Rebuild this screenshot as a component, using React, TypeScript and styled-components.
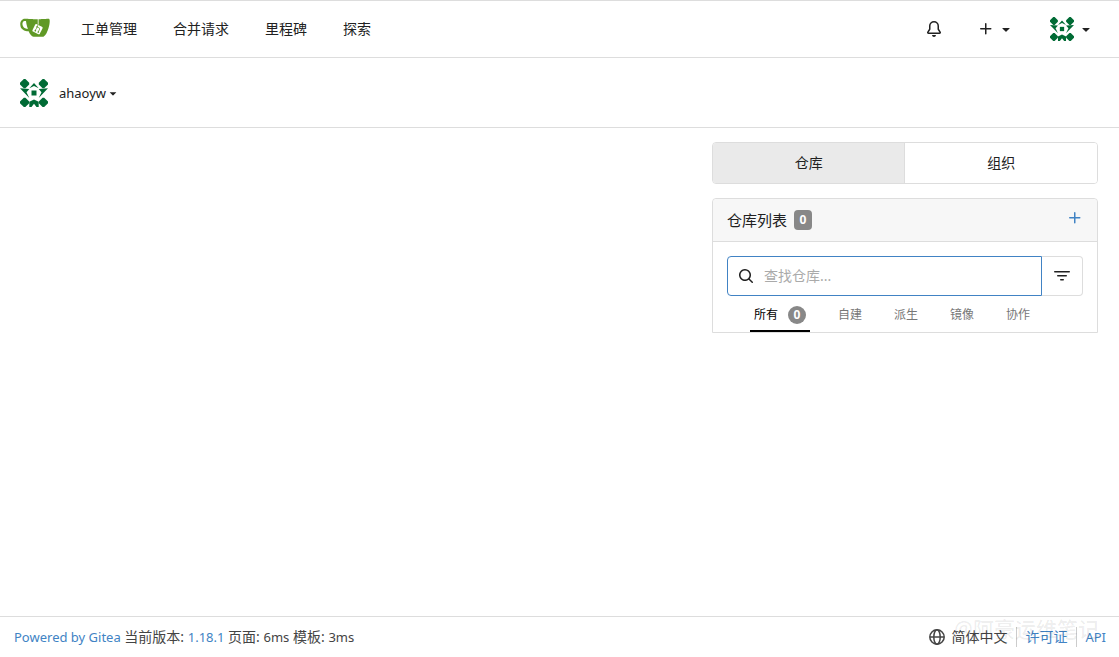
import React from "react";
import styled, { createGlobalStyle } from "styled-components";

const GlobalStyle = createGlobalStyle`
  * { box-sizing: border-box; }
  body {
    margin: 0;
    background: #fff;
    color: #212121;
    font-family: "Noto Sans", "Noto Sans CJK SC", sans-serif;
    font-size: 14px;
    line-height: 20px;
  }
  button, input { font: inherit; color: inherit; }
  a { color: #4183c4; text-decoration: none; }
`;

const Page = styled.div`
  min-height: 100vh;
  display: flex;
  flex-direction: column;
`;

const NavBar = styled.nav`
  display: flex;
  align-items: center;
  height: 58px;
  padding: 0 25px 0 20px;
  border-top: 1px solid #ddd;
  border-bottom: 1px solid #ddd;
`;

const LogoLink = styled.a`
  display: flex;
  margin-right: 31px;
  padding-bottom: 4px;
`;

const NavLinks = styled.div`
  display: flex;
  gap: 36px;
  flex: 1;
`;

const NavLink = styled.a`
  color: #212121;
`;

const NavTools = styled.div`
  display: flex;
  align-items: center;
  gap: 36px;
`;

const PlainButton = styled.button<{ $gap?: number }>`
  display: flex;
  align-items: center;
  gap: ${(p) => p.$gap ?? 0}px;
  padding: 0;
  border: 0;
  background: none;
  cursor: pointer;
`;

const ContextBar = styled.header`
  display: flex;
  align-items: center;
  height: 70px;
  padding: 0 20px;
  border-bottom: 1px solid #ddd;
`;

const Latin = styled.span`
  font-size: 13px;
`;

const UserName = styled(Latin)`
  margin-left: 11px;
`;

const Dashboard = styled.main`
  flex: 1;
  display: grid;
  grid-template-columns: minmax(0, 34fr) minmax(0, 19fr);
  align-items: start;
  padding: 14px 21px;
`;

const Sidebar = styled.aside`
  grid-column: 2;
  display: flex;
  flex-direction: column;
  gap: 14px;
`;

const Switcher = styled.div`
  display: flex;
  height: 42px;
  border: 1px solid #ddd;
  border-radius: 4px;
  overflow: hidden;
`;

const SwitchButton = styled.button<{ $active?: boolean }>`
  flex: 1;
  padding: 0;
  border: 0;
  background: ${(p) => (p.$active ? "#eaeaea" : "#fff")};
  cursor: pointer;
  & + & { border-left: 1px solid #ddd; }
`;

const Panel = styled.section`
  border: 1px solid #ddd;
  border-radius: 4px 4px 0 0;
`;

const PanelHeader = styled.div`
  display: flex;
  align-items: center;
  height: 43px;
  padding: 0 14px;
  border-bottom: 1px solid #ddd;
  border-radius: 4px 4px 0 0;
  background: #f7f7f7;
`;

const PanelTitle = styled.h4`
  margin: 0;
  font-size: 15px;
  font-weight: 400;
`;

const Count = styled.span<{ $round?: boolean }>`
  display: flex;
  align-items: center;
  justify-content: center;
  width: 18px;
  height: ${(p) => (p.$round ? 18 : 20)}px;
  border-radius: ${(p) => (p.$round ? 9 : 4)}px;
  background: #888;
  color: #fff;
  font-size: 12px;
  font-weight: 700;
`;

const TitleCount = styled(Count)`
  margin-left: 7px;
`;

const AddLink = styled.a`
  display: flex;
  margin: 0 0 4px auto;
`;

const SearchRow = styled.form`
  display: flex;
  padding: 14px 14px 0;
`;

const SearchBox = styled.label`
  flex: 1;
  display: flex;
  align-items: center;
  gap: 10px;
  height: 40px;
  padding: 0 10px;
  border: 1px solid #4183c4;
  border-radius: 4px 0 0 4px;
`;

const SearchInput = styled.input`
  flex: 1;
  min-width: 0;
  padding: 0;
  border: 0;
  outline: 0;
  background: none;
  &::placeholder { color: #aaa; opacity: 1; }
`;

const FilterButton = styled(PlainButton)`
  justify-content: center;
  width: 41px;
  border: 1px solid #ddd;
  border-left: 0;
  border-radius: 0 4px 4px 0;
`;

const Tabs = styled.div`
  display: flex;
  gap: 24px;
  padding: 0 37px;
`;

const Tab = styled.button<{ $active?: boolean }>`
  display: flex;
  align-items: center;
  gap: 10px;
  height: 36px;
  padding: 3px 4px 0;
  border: 0;
  border-bottom: 2px solid ${(p) => (p.$active ? "#000" : "transparent")};
  background: none;
  color: ${(p) => (p.$active ? "#000" : "#777")};
  font-size: 12px;
  cursor: pointer;
`;

const Footer = styled.footer`
  position: relative;
  display: flex;
  align-items: center;
  justify-content: space-between;
  height: 41px;
  padding: 0 13px 0 14px;
  border-top: 1px solid #ddd;
  color: #444;
`;

const FooterLinks = styled.div`
  display: flex;
  align-items: center;
  & > * + * {
    margin-left: 9px;
    padding-left: 8px;
    border-left: 1px solid #ccc;
  }
`;

const Watermark = styled.span`
  position: absolute;
  top: 0;
  right: 20px;
  color: rgba(0, 0, 0, 0.08);
  font-size: 21px;
  font-weight: 500;
  line-height: 24px;
  pointer-events: none;
`;

const icons = {
  bell: "M8 16a2 2 0 001.985-1.75c.017-.137-.097-.25-.235-.25h-3.5c-.138 0-.252.113-.235.25A2 2 0 008 16zM8 1.5A3.5 3.5 0 004.5 5v2.947c0 .346-.102.683-.294.97l-1.703 2.556a.018.018 0 00-.003.01l.001.006c0 .002.002.004.004.006a.017.017 0 00.006.004l.007.001h10.964l.007-.001a.016.016 0 00.006-.004.016.016 0 00.004-.006l.001-.007a.017.017 0 00-.003-.01l-1.703-2.554a1.75 1.75 0 01-.294-.97V5A3.5 3.5 0 008 1.5zM3 5a5 5 0 0110 0v2.947c0 .05.015.098.042.139l1.703 2.555A1.518 1.518 0 0113.482 13H2.518a1.518 1.518 0 01-1.263-2.36l1.703-2.554A.25.25 0 003 7.947V5z",
  plus: "M7.75 2a.75.75 0 01.75.75V7h4.25a.75.75 0 110 1.5H8.5v4.25a.75.75 0 11-1.5 0V8.5H2.75a.75.75 0 010-1.5H7V2.75A.75.75 0 017.75 2z",
  caret: "M4.427 7.427l3.396 3.396a.25.25 0 00.354 0l3.396-3.396A.25.25 0 0011.396 7H4.604a.25.25 0 00-.177.427z",
  search: "M11.5 7a4.499 4.499 0 11-8.998 0A4.499 4.499 0 0111.5 7zm-.82 4.74a6 6 0 111.06-1.06l3.04 3.04a.75.75 0 11-1.06 1.06l-3.04-3.04z",
  filter: "M.75 3a.75.75 0 000 1.5h14.5a.75.75 0 000-1.5H.75zM3 7.75A.75.75 0 013.75 7h8.5a.75.75 0 010 1.5h-8.5A.75.75 0 013 7.75zm3 4a.75.75 0 01.75-.75h2.5a.75.75 0 010 1.5h-2.5a.75.75 0 01-.75-.75z",
};

function Icon({ name, size = 16 }: { name: keyof typeof icons; size?: number }) {
  return (
    <svg width={size} height={size} viewBox="0 0 16 16" fill="currentColor" fillRule="evenodd" aria-hidden="true">
      <path d={icons[name]} />
    </svg>
  );
}

function Globe() {
  return (
    <svg width="16" height="16" viewBox="0 0 16 16" fill="none" stroke="currentColor" strokeWidth="1.5" aria-hidden="true">
      <circle cx="8" cy="8" r="7.2" />
      <ellipse cx="8" cy="8" rx="3.2" ry="7.2" />
      <path d="M1 8h14" />
    </svg>
  );
}

function Logo() {
  return (
    <svg width="30" height="30" viewBox="0 0 640 640" aria-hidden="true">
      <path fill="#fff" d="M395.9,484.2l-126.9-61c-12.5-6-17.9-21.2-11.8-33.8l61-126.9c6-12.5,21.2-17.9,33.8-11.8c17.2,8.3,27.1,13,27.1,13l-0.1-109.2l16.7-0.1l0.1,117.1c0,0,57.4,24.2,83.1,40.1c3.7,2.3,10.2,6.8,12.9,14.4c2.1,6.1,2,13.1-1,19.3l-61,126.9C423.6,484.9,408.4,490.3,395.9,484.2z" />
      <path fill="#609926" d="M622.7,149.8c-4.1-4.1-9.6-4-9.6-4s-117.2,6.6-177.9,8c-13.3,0.3-26.5,0.6-39.6,0.7c0,39.1,0,78.2,0,117.2c-5.5-2.6-11.1-5.3-16.6-7.9c0-36.4-0.1-109.2-0.1-109.2c-29,0.4-89.2-2.2-89.2-2.2s-141.4-7.1-156.8-8.5c-9.8-0.6-22.5-2.1-39,1.5c-8.7,1.8-33.5,7.4-53.8,26.9C-4.9,212.4,6.6,276.2,8,285.8c1.7,11.7,6.9,44.2,31.7,72.5c45.8,56.1,144.4,54.8,144.4,54.8s12.1,28.9,30.6,55.5c25,33.1,50.7,58.9,75.7,62c63,0,188.9-0.1,188.9-0.1s12,0.1,28.3-10.3c14-8.5,26.5-23.4,26.5-23.4s12.9-13.8,30.9-45.3c5.5-9.7,10.1-19.1,14.1-28c0,0,55.2-117.1,55.2-231.1C633.2,157.9,624.7,151.8,622.7,149.8z M125.6,353.9c-25.9-8.5-36.9-18.7-36.9-18.7S69.6,321.8,60,295.4c-16.5-44.2-1.4-71.2-1.4-71.2s8.4-22.5,38.5-30c13.8-3.7,31-3.1,31-3.1s7.1,59.4,15.7,94.2c7.2,29.2,24.8,77.7,24.8,77.7S142.5,359.9,125.6,353.9z M425.9,461.5c0,0-6.1,14.5-19.6,15.4c-5.8,0.4-10.3-1.2-10.3-1.2s-0.3-0.1-5.3-2.1l-112.9-55c0,0-10.9-5.7-12.8-15.6c-2.2-8.1,2.7-18.1,2.7-18.1L322,273c0,0,4.8-9.7,12.2-13c0.6-0.3,2.3-1,4.5-1.5c8.1-2.1,18,2.8,18,2.8l110.7,53.7c0,0,12.6,5.7,15.3,16.2c1.9,7.4-0.5,14-1.8,17.2C474.6,363.8,425.9,461.5,425.9,461.5z" />
      <path fill="#609926" d="M326.8,380.1c-8.2,0.1-15.4,5.8-17.3,13.8c-1.9,8,2,16.3,9.1,20c7.7,4,17.5,1.8,22.7-5.4c5.1-7.1,4.3-16.9-1.8-23.1l24-49.1c1.5,0.1,3.7,0.2,6.2-0.5c4.1-0.9,7.1-3.6,7.1-3.6c4.2,1.8,8.6,3.8,13.2,6.1c4.8,2.4,9.3,4.9,13.4,7.3c0.9,0.5,1.8,1.1,2.8,1.9c1.6,1.3,3.4,3.1,4.7,5.5c1.9,5.5-1.9,14.9-1.9,14.9c-2.3,7.6-18.4,40.6-18.4,40.6c-8.1-0.2-15.3,5-17.7,12.5c-2.6,8.1,1.1,17.3,8.9,21.3c7.8,4,17.4,1.7,22.5-5.3c5-6.8,4.6-16.3-1.1-22.6c1.9-3.7,3.7-7.4,5.6-11.3c5-10.4,13.5-30.4,13.5-30.4c0.9-1.7,5.7-10.3,2.7-21.3c-2.5-11.4-12.6-16.7-12.6-16.7c-12.2-7.9-29.2-15.2-29.2-15.2s0-4.1-1.1-7.1c-1.1-3.1-2.8-5.1-3.9-6.3c4.7-9.7,9.4-19.3,14.1-29c-4.1-2-8.1-4-12.2-6.1c-4.8,9.8-9.7,19.7-14.5,29.5c-6.7-0.1-12.9,3.5-16.1,9.4c-3.4,6.3-2.7,14.1,1.9,19.8C343.2,346.5,335,363.3,326.8,380.1z" />
    </svg>
  );
}

function Identicon({ size }: { size: number }) {
  const corners = [[4.6, 4.6], [23.4, 4.6], [4.6, 23.4], [23.4, 23.4]];
  return (
    <svg width={size} height={size} viewBox="0 0 28 28" fill="#006b35" aria-hidden="true">
      {corners.map(([x, y]) => (
        <path key={`${x}-${y}`} d={`M${x - 0.8} ${y - 4.6}h1.6l3.8 3.8v1.6l-3.8 3.8h-1.6l-3.8-3.8v-1.6z`} />
      ))}
      <path d="M14 4l4.700 5.300-4.700-2.300-4.700 2.300z" />
      <path d="M11.500 11.500h5v5h-5z" />
      <path d="M0 9.300l9.300.7-2.800 3.200 2.800 5.900zM28 9.300l-9.300.7 2.800 3.200-2.800 5.900z" />
      <path d="M9.300 28v-5.200L14 20.500l4.700 2.300V28h-2.200l-2.500-3.200-2.500 3.200z" />
    </svg>
  );
}

export default function App() {
  return (
    <Page>
      <GlobalStyle />
      <NavBar>
        <LogoLink href="#" aria-label="Gitea"><Logo /></LogoLink>
        <NavLinks>
          <NavLink href="#">工单管理</NavLink>
          <NavLink href="#">合并请求</NavLink>
          <NavLink href="#">里程碑</NavLink>
          <NavLink href="#">探索</NavLink>
        </NavLinks>
        <NavTools>
          <PlainButton aria-label="通知"><Icon name="bell" /></PlainButton>
          <PlainButton $gap={4} aria-label="创建"><Icon name="plus" /><Icon name="caret" /></PlainButton>
          <PlainButton $gap={4} aria-label="ahaoyw"><Identicon size={24} /><Icon name="caret" /></PlainButton>
        </NavTools>
      </NavBar>
      <ContextBar>
        <PlainButton>
          <Identicon size={28} />
          <UserName>ahaoyw</UserName>
          <Icon name="caret" size={14} />
        </PlainButton>
      </ContextBar>
      <Dashboard>
        <Sidebar>
          <Switcher>
            <SwitchButton $active>仓库</SwitchButton>
            <SwitchButton>组织</SwitchButton>
          </Switcher>
          <Panel>
            <PanelHeader>
              <PanelTitle>仓库列表</PanelTitle>
              <TitleCount>0</TitleCount>
              <AddLink href="#" aria-label="创建仓库"><Icon name="plus" /></AddLink>
            </PanelHeader>
            <SearchRow>
              <SearchBox>
                <Icon name="search" />
                <SearchInput placeholder="查找仓库..." aria-label="查找仓库" />
              </SearchBox>
              <FilterButton type="button" aria-label="过滤"><Icon name="filter" /></FilterButton>
            </SearchRow>
            <Tabs>
              <Tab $active>所有<Count $round>0</Count></Tab>
              <Tab>自建</Tab>
              <Tab>派生</Tab>
              <Tab>镜像</Tab>
              <Tab>协作</Tab>
            </Tabs>
          </Panel>
        </Sidebar>
      </Dashboard>
      <Footer>
        <div>
          <a href="#"><Latin>Powered by Gitea</Latin></a> 当前版本: <a href="#"><Latin>1.18.1</Latin></a> 页面: <Latin>6ms</Latin> 模板: <Latin>3ms</Latin>
        </div>
        <FooterLinks>
          <PlainButton $gap={6}><Globe />简体中文</PlainButton>
          <a href="#">许可证</a>
          <a href="#"><Latin>API</Latin></a>
        </FooterLinks>
        <Watermark>@阿豪运维笔记</Watermark>
      </Footer>
    </Page>
  );
}
